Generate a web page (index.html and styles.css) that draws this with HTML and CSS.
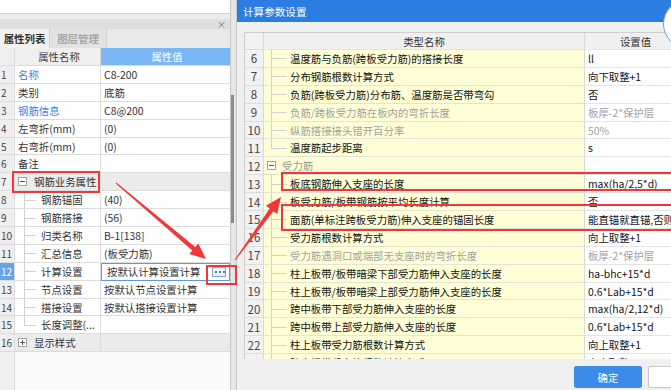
FILE: index.html
```html
<!DOCTYPE html>
<html lang="zh-CN">
<head>
    <meta charset="UTF-8">
    <meta name="viewport" content="width=device-width, initial-scale=1.0">
    <title>计算参数设置</title>
    <link rel="stylesheet" href="styles.css">
</head>
<body>
<div class="screen">

    <!-- property panel -->
    <aside class="props">
        <div class="props-top"></div>
        <div class="props-bar"><span class="props-close">×</span></div>
        <div class="tabs">
            <span class="tab active">属性列表</span>
            <span class="tab">图层管理</span>
        </div>
        <div class="pgrid">
            <div class="prow phead"><span class="num"></span><span class="pname">属性名称</span><span class="pval">属性值</span></div>
            <div class="prow"><span class="num">1</span><span class="pname link">名称</span><span class="pval">C8-200</span></div>
            <div class="prow"><span class="num">2</span><span class="pname">类别</span><span class="pval">底筋</span></div>
            <div class="prow"><span class="num">3</span><span class="pname link">钢筋信息</span><span class="pval">C8@200</span></div>
            <div class="prow"><span class="num">4</span><span class="pname">左弯折(mm)</span><span class="pval">(0)</span></div>
            <div class="prow"><span class="num">5</span><span class="pname">右弯折(mm)</span><span class="pval">(0)</span></div>
            <div class="prow"><span class="num">6</span><span class="pname">备注</span><span class="pval"></span></div>
            <div class="prow group"><span class="num">7</span><span class="pname"><i class="toggle"></i>钢筋业务属性</span><span class="pval"></span></div>
            <div class="prow"><span class="num">8</span><span class="pname"><i class="branch"></i>钢筋锚固</span><span class="pval">(40)</span></div>
            <div class="prow"><span class="num">9</span><span class="pname"><i class="branch"></i>钢筋搭接</span><span class="pval">(56)</span></div>
            <div class="prow"><span class="num">10</span><span class="pname"><i class="branch"></i>归类名称</span><span class="pval">B-1[138]</span></div>
            <div class="prow"><span class="num">11</span><span class="pname"><i class="branch"></i>汇总信息</span><span class="pval">(板受力筋)</span></div>
            <div class="prow selected"><span class="num">12</span><span class="pname"><i class="branch"></i>计算设置</span><span class="pval edit">按默认计算设置计算<i class="more"></i></span></div>
            <div class="prow"><span class="num">13</span><span class="pname"><i class="branch"></i>节点设置</span><span class="pval">按默认节点设置计算</span></div>
            <div class="prow"><span class="num">14</span><span class="pname"><i class="branch"></i>搭接设置</span><span class="pval">按默认搭接设置计算</span></div>
            <div class="prow"><span class="num">15</span><span class="pname"><i class="branch end"></i>长度调整(...</span><span class="pval"></span></div>
            <div class="prow group"><span class="num">16</span><span class="pname"><i class="toggle plus"></i>显示样式</span><span class="pval"></span></div>
        </div>
    </aside>

    <div class="splitter"><div class="thumb"></div></div>

    <!-- dialog -->
    <section class="dialog">
        <header class="dlg-title">计算参数设置</header>
        <span class="dlg-close"></span>
        <div class="dlg-body">
            <div class="ptable">
                <div class="trow thead"><span class="tnum"></span><span class="tname">类型名称</span><span class="tval">设置值</span></div>
                <div class="trow"><span class="tnum">6</span><span class="tname"><i class="branch"></i>温度筋与负筋(跨板受力筋)的搭接长度</span><span class="tval">ll</span></div>
                <div class="trow"><span class="tnum">7</span><span class="tname"><i class="branch"></i>分布钢筋根数计算方式</span><span class="tval">向下取整+1</span></div>
                <div class="trow"><span class="tnum">8</span><span class="tname"><i class="branch"></i>负筋(跨板受力筋)分布筋、温度筋是否带弯勾</span><span class="tval">否</span></div>
                <div class="trow muted"><span class="tnum">9</span><span class="tname"><i class="branch"></i>负筋/跨板受力筋在板内的弯折长度</span><span class="tval">板厚-2*保护层</span></div>
                <div class="trow muted"><span class="tnum">10</span><span class="tname"><i class="branch"></i>纵筋搭接接头错开百分率</span><span class="tval">50%</span></div>
                <div class="trow"><span class="tnum">11</span><span class="tname"><i class="branch end"></i>温度筋起步距离</span><span class="tval">s</span></div>
                <div class="trow tgroup"><span class="tnum">12</span><span class="tname"><i class="toggle"></i>受力筋</span><span class="tval"></span></div>
                <div class="trow"><span class="tnum">13</span><span class="tname"><i class="branch"></i>板底钢筋伸入支座的长度</span><span class="tval">max(ha/2,5*d)</span></div>
                <div class="trow"><span class="tnum">14</span><span class="tname"><i class="branch"></i>板受力筋/板带钢筋按平均长度计算</span><span class="tval">否</span></div>
                <div class="trow"><span class="tnum">15</span><span class="tname"><i class="branch"></i>面筋(单标注跨板受力筋)伸入支座的锚固长度</span><span class="tval">能直锚就直锚,否则按公式计算</span></div>
                <div class="trow"><span class="tnum">16</span><span class="tname"><i class="branch"></i>受力筋根数计算方式</span><span class="tval">向上取整+1</span></div>
                <div class="trow muted"><span class="tnum">17</span><span class="tname"><i class="branch"></i>受力筋遇洞口或端部无支座时的弯折长度</span><span class="tval">板厚-2*保护层</span></div>
                <div class="trow"><span class="tnum">18</span><span class="tname"><i class="branch"></i>柱上板带/板带暗梁下部受力筋伸入支座的长度</span><span class="tval">ha-bhc+15*d</span></div>
                <div class="trow"><span class="tnum">19</span><span class="tname"><i class="branch"></i>柱上板带/板带暗梁上部受力筋伸入支座的长度</span><span class="tval">0.6*Lab+15*d</span></div>
                <div class="trow"><span class="tnum">20</span><span class="tname"><i class="branch"></i>跨中板带下部受力筋伸入支座的长度</span><span class="tval">max(ha/2,12*d)</span></div>
                <div class="trow"><span class="tnum">21</span><span class="tname"><i class="branch"></i>跨中板带上部受力筋伸入支座的长度</span><span class="tval">0.6*Lab+15*d</span></div>
                <div class="trow"><span class="tnum">22</span><span class="tname"><i class="branch"></i>柱上板带受力筋根数计算方式</span><span class="tval">向上取整+1</span></div>
                <div class="trow"><span class="tnum">23</span><span class="tname"><i class="branch"></i>跨中板带受力筋根数计算方式</span><span class="tval">向上取整+1</span></div>
            </div>
            <div class="dlg-foot">
                <button class="btn primary">确定</button>
                <button class="btn">取消</button>
            </div>
        </div>
    </section>

    <!-- red annotations drawn over the screenshot -->
    <svg class="notes" width="671" height="390" viewBox="0 0 671 390">
        <g fill="none" stroke="#f0383a" stroke-width="2">
            <rect x="13" y="172" width="86" height="20"/>
            <rect x="207" y="266" width="29" height="18"/>
            <rect x="282" y="173" width="420" height="17"/>
            <rect x="282" y="205" width="420" height="25"/>
        </g>
        <g fill="#f0383a">
            <polygon points="115.7,183.4 192.3,250.4 189.3,254.1 206,259 198.3,243.4 195.3,247 116.3,182.6"/>
            <polygon points="235.4,260.3 273.4,211.3 277.2,214.1 281,197 265.9,205.8 269.7,208.6 234.6,259.7"/>
        </g>
    </svg>
</div>
</body>
</html>
```

FILE: styles.css
```css
* { box-sizing: border-box; }
body { margin: 0; font-family: "Noto Sans CJK SC", "Noto Sans", sans-serif; font-size: 10.4px; color: #222; background: #f0f0f0; }
i { font-style: normal; }
.screen { position: relative; display: flex; width: 671px; height: 390px; overflow: hidden; }

/* property panel */
.props { flex: none; width: 231px; display: flex; flex-direction: column; background: #ebebeb; border-right: 1px solid #c6c6c6; }
.props-top { height: 14px; background: #fff; border-bottom: 1px solid #cfcfcf; }
.props-bar { height: 10px; margin-top: 5px; background: #dedede; display: flex; justify-content: flex-end; align-items: center; padding-right: 4px; }
.props-close { font-size: 9px; line-height: 1; color: #777; }
.tabs { height: 19px; display: flex; background: #e9e9e9; }
.tab { display: flex; align-items: center; justify-content: center; width: 57px; font-weight: bold; color: #a8a8a8; background: #e2e2e2; border-right: 1px solid #d2d2d2; }
.tab.active { width: 50px; color: #333; background: #f1f1f1; }

.pgrid { flex: 1; background: linear-gradient(to right, #efefef 0 14px, #dcdcdc 14px 15px, #fafafa 15px); }
.prow { display: flex; height: 17.9px; }
.prow > span { display: flex; align-items: center; white-space: nowrap; overflow: hidden; border-right: 1px solid #dcdcdc; border-bottom: 1px solid #dcdcdc; }
.prow .num { width: 15px; padding-left: 1px; background: #efefef; color: #444; font-size: 10px; }
.prow .pname { width: 86px; padding-left: 3px; background: #fff; color: #333; }
.prow .pval { width: 129px; padding-left: 3px; background: #fff; color: #333; border-right: none; }
.phead { height: 18px; }
.phead .pname { justify-content: center; background: #efefef; color: #444; }
.phead .pval { justify-content: center; background: #7ab7f4; color: #fff; }
.prow .link { color: #3e7fe6; }
.group .pname, .group .pval { background: #ebebeb; }
.selected .num { background: #62a5ec; color: #fff; }
.prow .edit { border: 1px solid #5b9ae0; padding-left: 5px; }
.more {
    flex: none;
    margin-left: auto;
    margin-right: 3px;
    width: 14px;
    height: 10px;
    background: #eef4fc radial-gradient(circle, #4a7fc0 0 0.9px, transparent 1.3px) 1px 50% / 4px 4px repeat-x;
    border: 1px solid #7aa9e0;
}

.toggle { position: relative; flex: none; width: 9px; height: 9px; margin-right: 7px; background: #fff; border: 1px solid #a6a6a6; }
.toggle::after { content: ""; position: absolute; left: 1px; right: 1px; top: 3px; border-top: 1px solid #555; }
.toggle.plus::before { content: ""; position: absolute; top: 1px; bottom: 1px; left: 3px; border-left: 1px solid #555; }

.branch { position: relative; flex: none; align-self: stretch; width: 12px; margin-left: 6px; margin-right: 5px; }
.branch::before { content: ""; position: absolute; left: 0; top: 0; bottom: -1px; border-left: 1px solid #d2d2d2; }
.branch::after { content: ""; position: absolute; left: 0; right: 0; top: 50%; border-top: 1px solid #d2d2d2; }
.branch.end::before { bottom: 50%; }

.splitter { flex: none; width: 5px; background: #e6e6e6; }
.thumb { width: 3px; margin: 95px 0 0 0; height: 128px; background: #8c8c8c; }

/* dialog */
.dialog { position: relative; flex: none; width: 490px; display: flex; flex-direction: column; background: #f0f0f0; border-left: 1px solid #c6c6c6; }
.dlg-title { height: 22px; display: flex; align-items: center; padding-left: 6px; background: #2b7de1; color: #fff; font-size: 10.6px; }
.dlg-close { position: absolute; left: 426px; top: -1px; width: 50px; height: 50px; border-radius: 50%; background: #fff; border: 1px solid #6d9fdc; }
.dlg-body { flex: 1; padding: 10px 10px 0 7px; }

.ptable { height: 327px; overflow: hidden; background: #fff; border-top: 1px solid #cfcfcf; border-left: 1px solid #cfcfcf; }
.trow { display: flex; height: 17.9px; }
.trow > span { display: flex; align-items: center; white-space: nowrap; overflow: hidden; border-right: 1px solid #d9d9d9; border-bottom: 1px solid #e3e3d6; }
.trow .tnum { width: 19px; justify-content: center; background: #f2f2f2; color: #444; font-size: 11.5px; border-bottom-color: #dcdcdc; }
.trow .tname { width: 321px; padding-left: 7px; background: #fffed6; color: #141414; }
.trow .tval { width: 110px; padding-left: 3px; background: #fff; color: #141414; border-bottom-color: #e4e4e4; }
.trow .tname .branch { width: 16px; margin-left: 0; margin-right: 3px; }
.thead { height: 17px; }
.thead > span { justify-content: center; }
.trow.thead .tname, .trow.thead .tval { background: #f0f0f0; color: #333; padding-left: 0; }
.trow.thead .tval { width: 102px; }
.muted .tname, .muted .tval { color: #a2a2a2; }
.tgroup .tname { color: #9a9a9a; }
.tgroup .toggle { margin-left: -4px; margin-right: 6px; }

.dlg-foot { display: flex; justify-content: flex-end; gap: 6px; padding-top: 7px; }
.btn { width: 68px; height: 22px; padding: 0; font: inherit; color: #333; background: #fff; border: 1px solid #c9c9c9; border-radius: 2px; }
.btn.primary { background: #3c8ce7; border-color: #3c8ce7; color: #fff; }

.notes { position: absolute; left: 0; top: 0; pointer-events: none; }
```
